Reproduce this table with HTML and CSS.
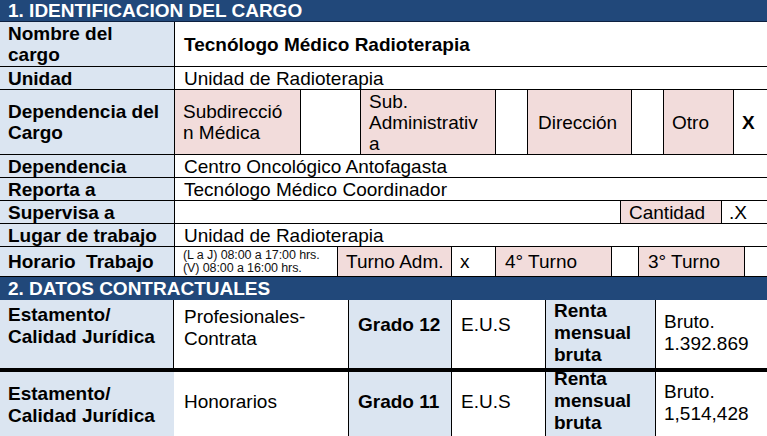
FILE: index.html
```html
<!DOCTYPE html>
<html lang="es">
<head>
<meta charset="utf-8">
<title>Identificación del cargo</title>
<link rel="stylesheet" href="styles.css">
</head>
<body>
<div class="sheet">
  <div class="hdr">1. IDENTIFICACION DEL CARGO</div>

  <div class="row r-name">
    <div class="c lab">Nombre del<br>cargo</div>
    <div class="c val b">Tecnólogo Médico Radioterapia</div>
  </div>

  <div class="row">
    <div class="c lab">Unidad</div>
    <div class="c val">Unidad de Radioterapia</div>
  </div>

  <div class="row r-depc">
    <div class="c lab">Dependencia del<br>Cargo</div>
    <div class="c pink w-subd">Subdirecció<br>n Médica</div>
    <div class="c w-b60"></div>
    <div class="c pink w-subadm">Sub.<br>Administrativ<br>a</div>
    <div class="c w-b32"></div>
    <div class="c pink w-dir">Dirección</div>
    <div class="c w-b32"></div>
    <div class="c pink w-otro">Otro</div>
    <div class="c b p8">X</div>
  </div>

  <div class="row">
    <div class="c lab">Dependencia</div>
    <div class="c val">Centro Oncológico Antofagasta</div>
  </div>

  <div class="row">
    <div class="c lab">Reporta a</div>
    <div class="c val">Tecnólogo Médico Coordinador</div>
  </div>

  <div class="row">
    <div class="c lab">Supervisa a</div>
    <div class="c w-supblank"></div>
    <div class="c pink w-cant">Cantidad</div>
    <div class="c p7">.X</div>
  </div>

  <div class="row">
    <div class="c lab">Lugar de trabajo</div>
    <div class="c val">Unidad de Radioterapia</div>
  </div>

  <div class="row r-hor">
    <div class="c lab">Horario&nbsp; Trabajo</div>
    <div class="c w-time small">(L a J) 08:00 a 17:00 hrs.<br>(V) 08:00 a 16:00 hrs.</div>
    <div class="c pink w-tadm">Turno Adm.</div>
    <div class="c w-x">x</div>
    <div class="c pink w-t4">4° Turno</div>
    <div class="c w-b27"></div>
    <div class="c pink w-t3">3° Turno</div>
    <div class="c"></div>
  </div>

  <div class="hdr hdr2">2. DATOS CONTRACTUALES</div>

  <div class="row2 r-a">
    <div class="c lab2 top pt4">Estamento/<br>Calidad Jurídica</div>
    <div class="c w2-val top pt6">Profesionales-<br>Contrata</div>
    <div class="c lab2 w2-grado b top pt14">Grado 12</div>
    <div class="c w2-eus top pt14">E.U.S</div>
    <div class="c lab2 w2-renta b top pt0">Renta<br>mensual<br>bruta</div>
    <div class="c w2-bruto top pt11">Bruto.<br>1.392.869</div>
  </div>

  <div class="row2 r-b">
    <div class="c lab2 nob top pt11">Estamento/<br>Calidad Jurídica</div>
    <div class="c w2-val top pt19">Honorarios</div>
    <div class="c lab2 w2-grado b top pt19">Grado 11</div>
    <div class="c w2-eus top pt19">E.U.S</div>
    <div class="c lab2 w2-renta b top clip"><span class="up">Renta<br>mensual<br>bruta</span></div>
    <div class="c w2-bruto top pt9">Bruto.<br>1,514,428</div>
  </div>
</div>
</body>
</html>
```

FILE: styles.css
```css
html, body {
  margin: 0;
  padding: 0;
  background: #ffffff;
}

body {
  font-family: "Liberation Sans", Arial, sans-serif;
  font-size: 19px;
  line-height: 21px;
  color: #000000;
  overflow: hidden;
}

.sheet {
  width: 767px;
}

.hdr {
  box-sizing: border-box;
  height: 22px;
  line-height: 21px;
  padding-left: 8px;
  background: #21487a;
  color: #ffffff;
  font-weight: bold;
  border-bottom: 1px solid #0e2140;
  white-space: nowrap;
  overflow: hidden;
}

.hdr2 {
  height: 23px;
  line-height: 23px;
  border-bottom: 0;
}

.row {
  box-sizing: border-box;
  display: flex;
  height: 23px;
  border-bottom: 1px solid #000000;
}

.r-name { height: 45px; }
.r-depc { height: 65px; }
.r-hor { height: 30px; }

.c {
  box-sizing: border-box;
  display: flex;
  align-items: center;
  flex: none;
  border-right: 1px solid #000000;
  padding-left: 8px;
  white-space: nowrap;
  overflow: hidden;
}

.c:last-child {
  flex: 1;
  border-right: 0;
}

.lab {
  width: 175px;
  background: #dbe5f1;
  font-weight: bold;
}

.val {
  padding-left: 9px;
}

.b { font-weight: bold; }
.p8 { padding-left: 8px; }
.p7 { padding-left: 7px; }

.pink { background: #f2dcdb; }

.w-subd { width: 126px; }
.w-b60 { width: 60px; }
.w-subadm { width: 135px; }
.w-b32 { width: 32px; }
.w-dir { width: 104px; padding-left: 10px; }
.w-otro { width: 70px; }
.w-supblank { width: 446px; }
.w-cant { width: 101px; }
.w-time { width: 163px; }
.w-tadm { width: 114px; }
.w-x { width: 44px; }
.w-t4 { width: 116px; padding-left: 9px; }
.w-b27 { width: 27px; }
.w-t3 { width: 106px; padding-left: 9px; }

.small {
  font-size: 12.5px;
  line-height: 13px;
  letter-spacing: -0.1px;
  color: #111111;
  padding-top: 1px;
}

/* section 2 */
.row2 {
  box-sizing: border-box;
  display: flex;
  line-height: 22px;
}

.r-a {
  height: 72px;
  border-bottom: 4px solid #000000;
}

.r-b {
  height: 64px;
}

.lab2 {
  background: #dbe5f1;
}

.row2 > .c:first-child {
  width: 174px;
  font-weight: bold;
}

.nob { border-right: 0; }

.w2-val { width: 175px; padding-left: 10px; }
.w2-grado { width: 103px; padding-left: 9px; }
.w2-eus { width: 94px; padding-left: 9px; }
.w2-renta { width: 110px; padding-left: 8px; }
.w2-bruto { padding-left: 8px; }

.top { align-items: flex-start; }
.pt0 { padding-top: 0; }
.pt4 { padding-top: 4px; }
.pt6 { padding-top: 6px; }
.pt9 { padding-top: 9px; }
.pt11 { padding-top: 11px; }
.pt14 { padding-top: 14px; }
.pt19 { padding-top: 19px; }

.clip { overflow: hidden; }
.up {
  display: block;
  margin-top: -4px;
}
```
